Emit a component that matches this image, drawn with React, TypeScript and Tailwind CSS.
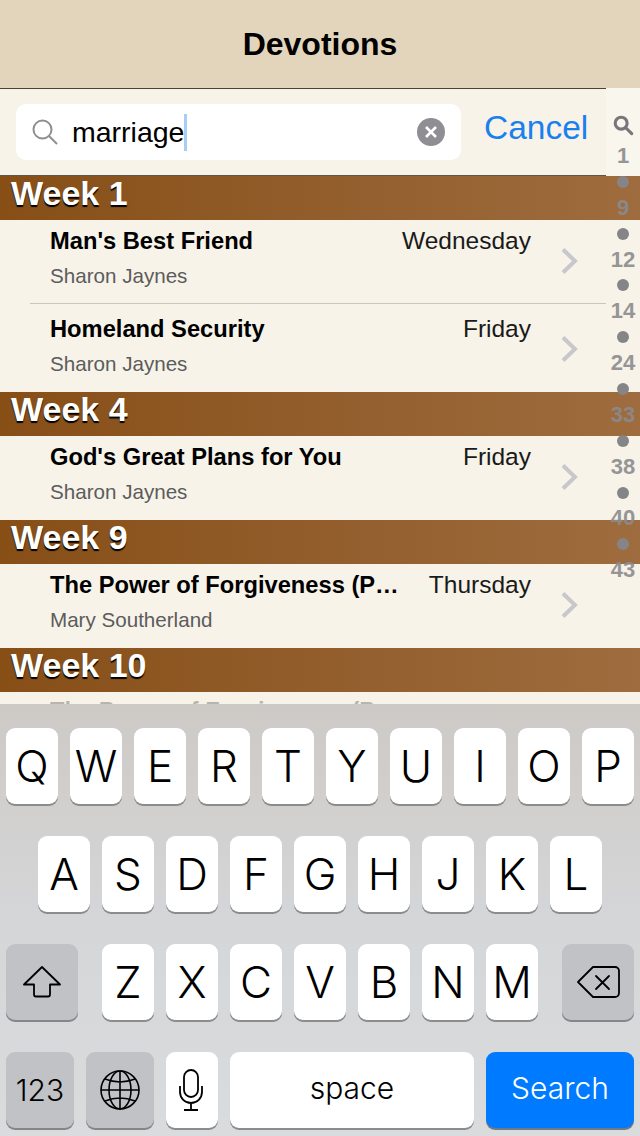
const sections = [
  {
    week: "Week 1",
    rows: [
      { title: "Man's Best Friend", day: "Wednesday", author: "Sharon Jaynes" },
      { title: "Homeland Security", day: "Friday", author: "Sharon Jaynes" },
    ],
  },
  {
    week: "Week 4",
    rows: [{ title: "God's Great Plans for You", day: "Friday", author: "Sharon Jaynes" }],
  },
  {
    week: "Week 9",
    rows: [
      { title: "The Power of Forgiveness (P…", day: "Thursday", author: "Mary Southerland" },
    ],
  },
];

const indexItems = ["1", "9", "12", "14", "24", "33", "38", "40", "43"];

const rowOne = ["Q", "W", "E", "R", "T", "Y", "U", "I", "O", "P"];
const rowTwo = ["A", "S", "D", "F", "G", "H", "J", "K", "L"];
const rowThree = ["Z", "X", "C", "V", "B", "N", "M"];

const keyFont = "font-['Inter','Liberation_Sans',sans-serif]";

function WeekHeader({ label }: { label: string }) {
  return (
    <div className="flex h-11 items-center bg-gradient-to-r from-[#874f16] to-[#9e6c3e] pb-[10px] pl-[11px] text-[34px] font-bold leading-none text-white [text-shadow:0_2px_1px_#000]">
      {label}
    </div>
  );
}

function DevotionRow({
  title,
  day,
  author,
  divider,
  tall,
}: {
  title: string;
  day: string;
  author: string;
  divider?: boolean;
  tall?: boolean;
}) {
  return (
    <div className={`relative flex items-start bg-[#f7f3e9] ${tall ? "h-[88px] pt-[13px]" : "h-[84px] pt-[9px]"}`}>
      <div className="min-w-0 flex-1 pl-[50px]">
        <div className="flex items-center justify-between">
          <span className="text-[23.700px] font-bold leading-6 text-black">{title}</span>
          <span className="text-[24.500px] leading-6 text-[#1a1a1a]">{day}</span>
        </div>
        <div className="mt-[12px] text-[20.600px] leading-[21px] text-[#5c5c5c]">{author}</div>
      </div>
      <svg className="ml-[30px] mr-[61px] mt-[19px]" width="18" height="26" viewBox="0 0 18 26" fill="none" stroke="#c8c7cc" strokeWidth="4">
        <path d="M2 1.500L14 13 2 24.500" />
      </svg>
      {divider && <div className="absolute bottom-0 left-[30px] right-[34px] h-px bg-[#c8c7c2]" />}
    </div>
  );
}

function SideIndex() {
  return (
    <div className="absolute right-0 top-[88px] w-[34px] text-[22px] font-bold leading-none text-[#8b8b8e]">
      <div className="absolute inset-x-0 top-0 h-[88px] bg-[#f9f6ee]" />
      <div className="relative flex flex-col items-center pt-[26px]">
        <svg width="22" height="22" viewBox="0 0 24 24" fill="none" stroke="#77777a" strokeWidth="3.4">
          <circle cx="10" cy="10" r="6.5" />
          <path d="M15 15l6.5 6.5" strokeLinecap="round" />
        </svg>
        <div className="h-[7px]" />
        {indexItems.map((item, i) => (
          <div key={item} className="flex flex-col items-center">
            <span className="flex h-[26px] items-center opacity-90">{item}</span>
            {i < indexItems.length - 1 && <span className="my-[6.900px] size-3 rounded-full bg-[#858588]" />}
          </div>
        ))}
      </div>
    </div>
  );
}

function LetterKey({ label }: { label: string }) {
  return (
    <div
      className={`flex h-[76px] w-[52px] items-center justify-center rounded-[9px] bg-white text-[44px] font-[270] text-black shadow-[0_2px_0_#8b8c8e] ${keyFont}`}
    >
      {label}
    </div>
  );
}

function Keyboard() {
  return (
    <div className="flex h-[432px] flex-col bg-gradient-to-b from-[#cdcac6] via-[#d5d6d8] to-[#dadbdc] px-[6px] pt-6">
      <div className="flex gap-3">
        {rowOne.map((k) => (
          <LetterKey key={k} label={k} />
        ))}
      </div>
      <div className="mt-8 flex justify-center gap-3">
        {rowTwo.map((k) => (
          <LetterKey key={k} label={k} />
        ))}
      </div>
      <div className="mt-8 flex justify-between">
        <div className="flex h-[76px] w-[72px] items-center justify-center rounded-[9px] bg-[#c0c2c6] shadow-[0_2px_0_#85868a]">
          <svg width="38" height="32" viewBox="0 0 38 32" fill="none" stroke="#000" strokeWidth="1.8" strokeLinejoin="round">
            <path d="M19 1L1 18.500h10v10a2 2 0 0 0 2 2h12a2 2 0 0 0 2-2v-10h10z" />
          </svg>
        </div>
        <div className="flex gap-3">
          {rowThree.map((k) => (
            <LetterKey key={k} label={k} />
          ))}
        </div>
        <div className="flex h-[76px] w-[72px] items-center justify-center rounded-[9px] bg-[#c0c2c6] shadow-[0_2px_0_#85868a]">
          <svg width="44" height="32" viewBox="0 0 44 32" fill="none" stroke="#000" strokeWidth="1.8" strokeLinejoin="round" strokeLinecap="round">
            <path d="M17 1h22a4 4 0 0 1 4 4v22a4 4 0 0 1-4 4H17L2 16z" />
            <path d="M20 10l13 13M33 10L20 23" />
          </svg>
        </div>
      </div>
      <div className="mt-8 flex gap-3">
        <div className={`flex h-[76px] w-[68px] items-center justify-center rounded-[9px] bg-[#c0c2c6] text-[30px] font-light text-black shadow-[0_2px_0_#85868a] ${keyFont}`}>
          123
        </div>
        <div className="flex h-[76px] w-[68px] items-center justify-center rounded-[9px] bg-[#c0c2c6] shadow-[0_2px_0_#85868a]">
          <svg width="40" height="40" viewBox="0 0 40 40" fill="none" stroke="#000" strokeWidth="1.6">
            <circle cx="20" cy="20" r="19" />
            <ellipse cx="20" cy="20" rx="11" ry="19" />
            <path d="M20 1v38M1 20h38M5 9Q20 15 35 9M5 31Q20 25 35 31" />
          </svg>
        </div>
        <div className="flex h-[76px] w-[52px] items-center justify-center rounded-[9px] bg-white pr-[2px] shadow-[0_2px_0_#8b8c8e]">
          <svg width="24" height="42" viewBox="0 0 24 42" fill="none" stroke="#000" strokeWidth="1.8">
            <rect x="5" y="1" width="14" height="27" rx="7" />
            <path d="M1 17v6a11 11 0 0 0 22 0v-6M12 34v7M5 41h14" />
          </svg>
        </div>
        <div className={`flex h-[76px] w-[244px] items-center justify-center rounded-[9px] bg-white pb-1 text-[30px] font-light text-black shadow-[0_2px_0_#8b8c8e] ${keyFont}`}>
          space
        </div>
        <div className={`flex h-[76px] w-[148px] items-center justify-center rounded-[9px] bg-[#007aff] pb-1 text-[30px] font-light text-white shadow-[0_2px_0_#6f7a86] ${keyFont}`}>
          Search
        </div>
      </div>
    </div>
  );
}

export default function App() {
  return (
    <div className="relative flex h-[1136px] w-[640px] flex-col overflow-hidden bg-[#f7f3e9] font-['Liberation_Sans',Arial,sans-serif]">
      <header className="flex h-[89px] shrink-0 items-center justify-center border-b border-[#4a4438] bg-[#e3d5bb] text-[32px] font-bold text-black">
        Devotions
      </header>

      <main className="min-h-0 flex-1 overflow-hidden">
        <div className="flex h-[87px] items-start border-b border-[#5c564b] pl-4 pt-[15px]">
          <div className="flex h-14 w-[445px] shrink-0 items-center rounded-[10px] bg-white pl-4 pr-[16px]">
            <svg width="26" height="26" viewBox="0 0 26 26" fill="none" stroke="#8e8e93" strokeWidth="2">
              <circle cx="10.500" cy="10.500" r="9" />
              <path d="M17 17l8 8" />
            </svg>
            <span className="ml-[14px] text-[28.500px] leading-none text-black">marriage</span>
            <span className="h-[37px] w-[3px] bg-[#a8cdf6]" />
            <span className="ml-auto flex size-7 items-center justify-center rounded-full bg-[#8e8e93]">
              <svg width="14" height="14" viewBox="0 0 14 14" stroke="#fff" strokeWidth="2.600">
                <path d="M2 2l10 10M12 2L2 12" />
              </svg>
            </span>
          </div>
          <span className="ml-[23px] mt-[7px] text-[33.500px] leading-none text-[#1a80ee]">Cancel</span>
        </div>
        {sections.map((section) => (
          <section key={section.week}>
            <WeekHeader label={section.week} />
            {section.rows.map((row, i) => (
              <DevotionRow key={row.title} {...row} divider={i < section.rows.length - 1} tall={i > 0} />
            ))}
          </section>
        ))}
        <WeekHeader label="Week 10" />
        {/* only the tops of this row peek out above the keyboard */}
        <div className="pl-[50px] pt-[7px] text-[23.700px] font-bold leading-6 text-black opacity-25">
          The Power of Forgiveness (P…
        </div>
      </main>

      <SideIndex />
      <Keyboard />
    </div>
  );
}
